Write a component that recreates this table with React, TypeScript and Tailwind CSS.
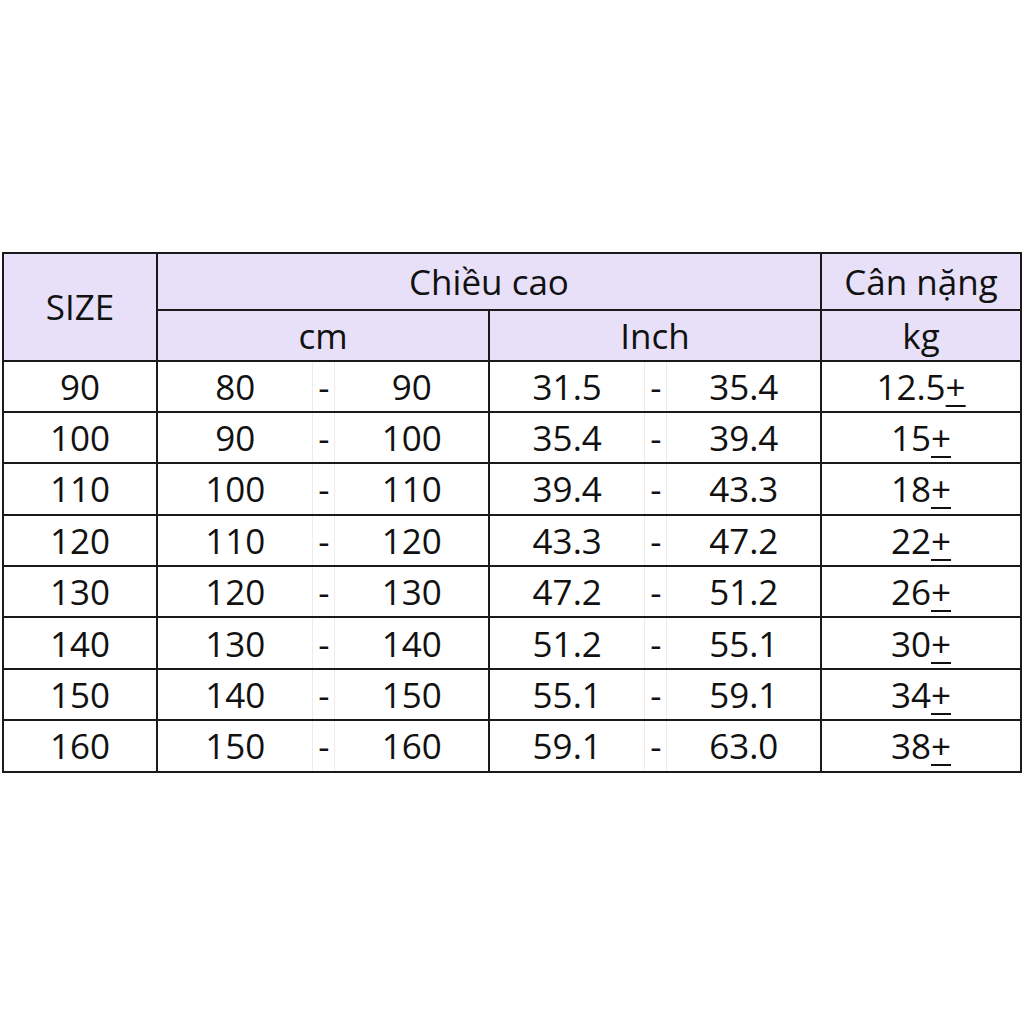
import React from 'react';

type Row = { size: string; cm: [string, string]; inch: [string, string]; kg: string };

const rows: Row[] = [
  { size: '90', cm: ['80', '90'], inch: ['31.5', '35.4'], kg: '12.5' },
  { size: '100', cm: ['90', '100'], inch: ['35.4', '39.4'], kg: '15' },
  { size: '110', cm: ['100', '110'], inch: ['39.4', '43.3'], kg: '18' },
  { size: '120', cm: ['110', '120'], inch: ['43.3', '47.2'], kg: '22' },
  { size: '130', cm: ['120', '130'], inch: ['47.2', '51.2'], kg: '26' },
  { size: '140', cm: ['130', '140'], inch: ['51.2', '55.1'], kg: '30' },
  { size: '150', cm: ['140', '150'], inch: ['55.1', '59.1'], kg: '34' },
  { size: '160', cm: ['150', '160'], inch: ['59.1', '63.0'], kg: '38' },
];

const App: React.FC = () => {
  return (
    <div
      className="w-[1024px] h-[1024px] bg-white flex items-center justify-center text-[#111111]"
      style={{ fontFamily: '"Open Sans", "Noto Sans", sans-serif' }}
    >
      <table className="table-fixed border-collapse w-[1018px] text-[35px] leading-none text-center">
        <colgroup>
          <col className="w-[154px]" />
          <col className="w-[156px]" />
          <col className="w-[22px]" />
          <col className="w-[154px]" />
          <col className="w-[156px]" />
          <col className="w-[22px]" />
          <col className="w-[154px]" />
          <col className="w-[200px]" />
        </colgroup>
        <thead className="bg-[#e7e0f8]">
          <tr className="h-[57px]">
            <th rowSpan={2} className="border-2 border-[#1a1a1a] font-normal">SIZE</th>
            <th colSpan={6} className="border-2 border-[#1a1a1a] font-normal">Chiều cao</th>
            <th className="border-2 border-[#1a1a1a] font-normal">Cân nặng</th>
          </tr>
          <tr className="h-[51px]">
            <th colSpan={3} className="border-2 border-[#1a1a1a] font-normal">cm</th>
            <th colSpan={3} className="border-2 border-[#1a1a1a] font-normal">Inch</th>
            <th className="border-2 border-[#1a1a1a] font-normal">kg</th>
          </tr>
        </thead>
        <tbody>
          {rows.map((r) => (
            <tr key={r.size} className="h-[51.375px] border-2 border-[#1a1a1a]">
              <td className="border-2 border-[#1a1a1a]">{r.size}</td>
              <td className="border-l-2 border-l-[#1a1a1a]">{r.cm[0]}</td>
              <td className="border-x border-x-[#ececec]">-</td>
              <td>{r.cm[1]}</td>
              <td className="border-l-2 border-l-[#1a1a1a]">{r.inch[0]}</td>
              <td className="border-x border-x-[#ececec]">-</td>
              <td>{r.inch[1]}</td>
              <td className="border-2 border-[#1a1a1a]">
                {r.kg}
                <span className="underline underline-offset-[5px] decoration-2">+</span>
              </td>
            </tr>
          ))}
        </tbody>
      </table>
    </div>
  );
};

export default App;
